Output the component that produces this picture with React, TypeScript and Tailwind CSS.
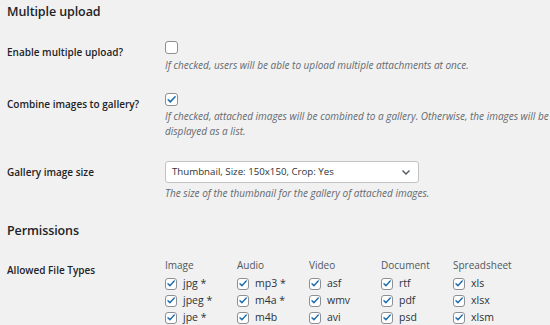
import React from "react";

const font = { fontFamily: '"Open Sans", "Noto Sans", sans-serif' };

function Box({ checked, small }: { checked?: boolean; small?: boolean }) {
  return (
    <span
      className={
        "inline-flex items-center justify-center shrink-0 rounded-[3px] border border-[#8c8f94] bg-white " +
        (small ? "w-[12px] h-[12px]" : "w-[13px] h-[13px]")
      }
    >
      {checked && (
        <svg width="11" height="11" viewBox="0 0 20 20">
          <path d="M4 10.5l3.8 3.8L16.5 5" fill="none" stroke="#2271b1" strokeWidth="3" strokeLinecap="round" strokeLinejoin="round" />
        </svg>
      )}
    </span>
  );
}

const cols = [
  { h: "Image", items: ["jpg *", "jpeg *", "jpe *"] },
  { h: "Audio", items: ["mp3 *", "m4a *", "m4b"] },
  { h: "Video", items: ["asf", "wmv", "avi"] },
  { h: "Document", items: ["rtf", "pdf", "psd"] },
  { h: "Spreadsheet", items: ["xls", "xlsx", "xlsm"] },
];

export default function App() {
  return (
    <div className="w-[550px] h-[325px] overflow-hidden bg-[#f1f1f1] text-[#1d2327] pl-[7px]" style={font}>
      <h2 className="text-[12.5px] font-semibold leading-[20px] pt-[2px] tracking-[-0.1px]">Multiple upload</h2>

      <div className="flex mt-[19px]">
        <div className="w-[158px] pt-[3px] text-[10px] font-semibold leading-[16px]">Enable multiple upload?</div>
        <div className="flex flex-col">
          <div className="h-[13px] mb-[3px] flex items-start"><Box /></div>
          <p className="text-[10px] italic text-[#646970] leading-[16px]">If checked, users will be able to upload multiple attachments at once.</p>
        </div>
      </div>

      <div className="flex mt-[20px]">
        <div className="w-[158px] pt-[3px] text-[10px] font-semibold leading-[16px]">Combine images to gallery?</div>
        <div className="flex flex-col w-[385px]">
          <div className="h-[13px] mb-[3px] flex items-start"><Box checked /></div>
          <p className="text-[10px] italic text-[#646970] leading-[15px]">
            If checked, attached images will be combined to a gallery. Otherwise, the images will be displayed as a list.
          </p>
        </div>
      </div>

      <div className="flex mt-[22px]">
        <div className="w-[158px] pt-[3px] text-[10px] font-semibold leading-[16px]">Gallery image size</div>
        <div className="flex flex-col">
          <div className="w-[254px] h-[22px] bg-white border border-[#c3c4c7] rounded-[3px] flex items-center justify-between pl-[6px] pr-[7px] text-[9.7px] text-[#2c3338]">
            <span>Thumbnail, Size: 150x150, Crop: Yes</span>
            <svg width="10" height="10" viewBox="0 0 10 10">
              <path d="M1.5 3.5L5 7l3.5-3.5" fill="none" stroke="#50575e" strokeWidth="1.4" />
            </svg>
          </div>
          <p className="text-[10px] italic text-[#646970] leading-[16px] mt-[2px]">The size of the thumbnail for the gallery of attached images.</p>
        </div>
      </div>

      <h2 className="text-[12.5px] font-semibold leading-[20px] mt-[20px] tracking-[-0.1px]">Permissions</h2>

      <div className="flex mt-[16px]">
        <div className="w-[158px] pt-[5px] text-[10px] font-semibold leading-[16px]">Allowed File Types</div>
        <div className="flex">
          {cols.map((c) => (
            <div key={c.h} className="w-[72px] flex flex-col">
              <div className="text-[10px] text-[#50575e] leading-[16px] mb-[2px]">{c.h}</div>
              {c.items.map((it) => (
                <label key={it} className="flex items-center gap-[6px] h-[17px] text-[10.5px] text-[#2c3338]">
                  <Box checked small />
                  <span>{it}</span>
                </label>
              ))}
            </div>
          ))}
        </div>
      </div>
    </div>
  );
}
